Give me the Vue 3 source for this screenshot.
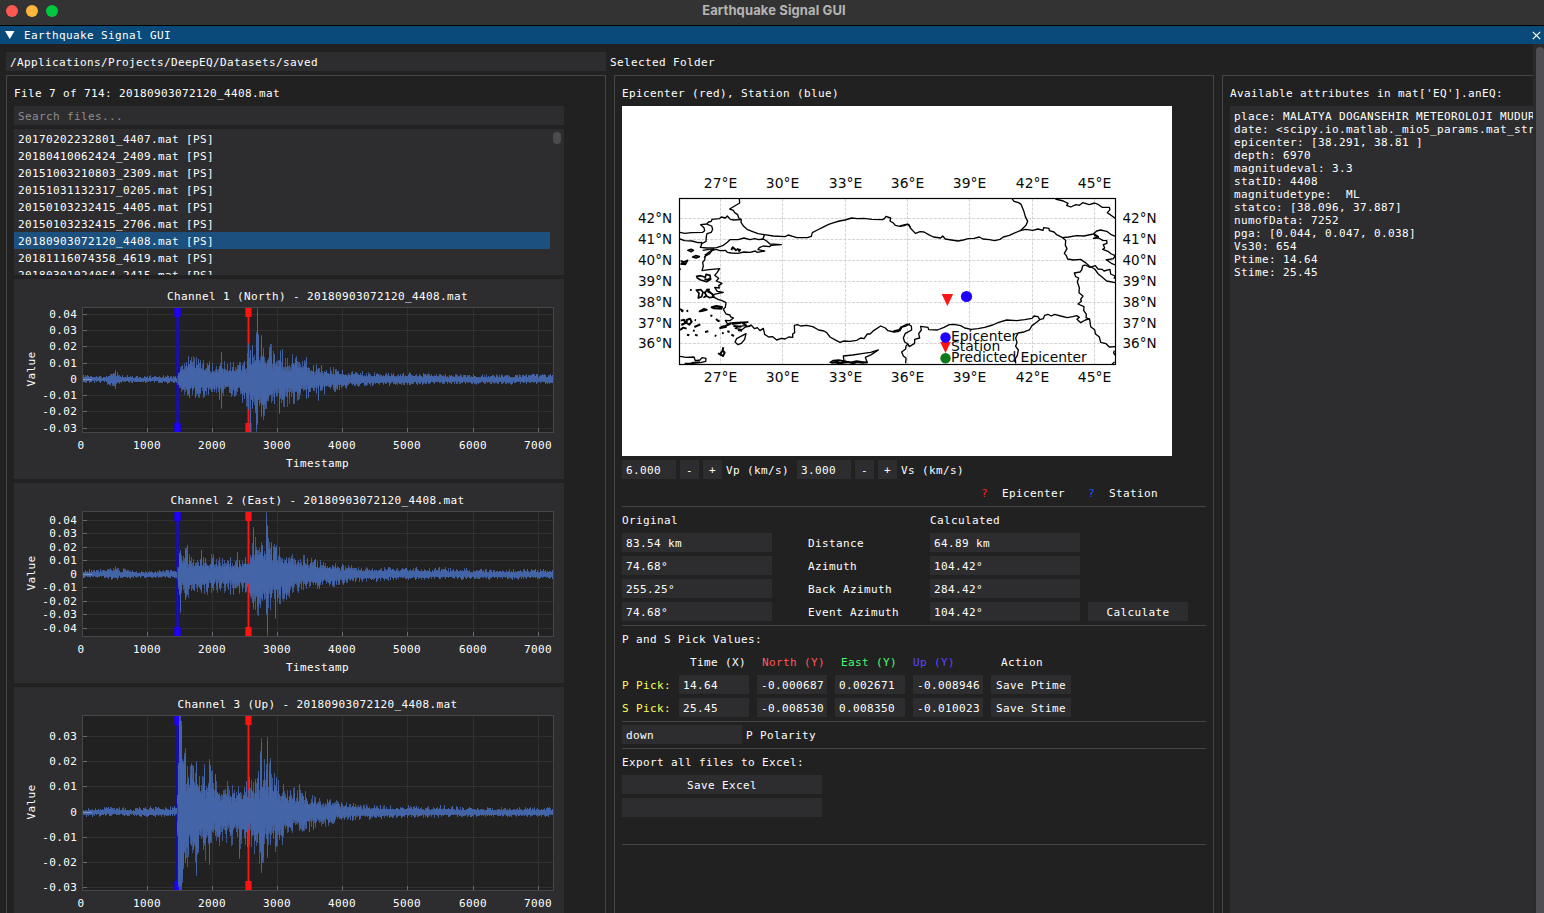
<script setup>
const files = [
  '20170202232801_4407', '20180410062424_2409', '20151003210803_2309', '20151031132317_0205',
  '20150103232415_4405', '20150103232415_2706', '20180903072120_4408', '20181116074358_4619',
  '20180301024054_2415',
]

const attributes = [
  'place: MALATYA DOGANSEHIR METEOROLOJI MUDURLUGU',
  'date: <scipy.io.matlab._mio5_params.mat_struct object>',
  'epicenter: [38.291, 38.81 ]',
  'depth: 6970',
  'magnitudeval: 3.3',
  'statID: 4408',
  'magnitudetype:  ML',
  'statco: [38.096, 37.887]',
  'numofData: 7252',
  'pga: [0.044, 0.047, 0.038]',
  'Vs30: 654',
  'Ptime: 14.64',
  'Stime: 25.45',
]

const xTicks = [
  [67.5, '0'], [133.5, '1000'], [198.5, '2000'], [263.5, '3000'],
  [328.5, '4000'], [393.5, '5000'], [459.5, '6000'], [524.5, '7000'],
]

// Envelope rows: [x, height above zero, height below zero]
const tail = [[330, 11, 10], [342, 9, 8], [360, 8, 7], [385, 7, 6], [430, 7, 5], [480, 5, 5], [540, 6, 5]]
const defs = [
  {
    title: 'Channel 1 (North) - 20180903072120_4408.mat', height: 200, bottom: 154, zero: 100.5, seed: 11,
    ticks: [[35.5, '0.04'], [51.5, '0.03'], [67.5, '0.02'], [84.5, '0.01'], [100.5, '0'], [116.5, '-0.01'], [132.5, '-0.02'], [149.5, '-0.03']],
    env: [[68, 6, 5], [72, 5, 4], [90, 4, 4], [94, 6, 6], [101, 10, 9], [106, 5, 4], [120, 4, 4], [162, 4, 4], [165, 12, 15], [174, 24, 19], [186, 24, 20], [198, 18, 20], [206, 24, 21], [212, 18, 18], [224, 19, 19], [230, 22, 26], [236, 36, 36], [244, 48, 46], [250, 40, 46], [257, 37, 34], [266, 30, 30], [276, 26, 28], [290, 22, 21], [301, 18, 17], [315, 14, 14], ...tail],
    spikes: [[174, 24, 15], [207, 28, 29], [228, 15, 23], [234, 37, 30], [236, 30, 53], [242, 48, 53], [243, 72, 45], [244, 46, 20], [268, 31, 20], [265, 20, 34], [292, 23, 19], [304, 12, 21]],
  },
  {
    title: 'Channel 2 (East) - 20180903072120_4408.mat', height: 200, bottom: 154, zero: 91.5, seed: 37,
    ticks: [[37.5, '0.04'], [50.5, '0.03'], [64.5, '0.02'], [77.5, '0.01'], [91.5, '0'], [104.5, '-0.01'], [118.5, '-0.02'], [131.5, '-0.03'], [145.5, '-0.04']],
    env: [[68, 5, 4], [90, 5, 4], [101, 9, 7], [106, 5, 4], [113, 8, 5], [120, 4, 4], [162, 5, 4], [165, 22, 22], [172, 28, 26], [178, 18, 18], [186, 20, 23], [200, 22, 18], [220, 16, 22], [232, 19, 18], [236, 28, 28], [242, 39, 40], [248, 43, 44], [256, 35, 40], [264, 29, 30], [273, 22, 26], [284, 20, 18], [300, 17, 15], [315, 13, 13], ...tail],
    spikes: [[166, 25, 38], [171, 27, 25], [173, 30, 20], [187, 25, 18], [223, 23, 12], [239, 48, 34], [252, 64, 40], [253, 50, 64], [261, 28, 44]],
  },
  {
    title: 'Channel 3 (Up) - 20180903072120_4408.mat', height: 240, bottom: 204, zero: 125.5, seed: 71,
    ticks: [[49.5, '0.03'], [74.5, '0.02'], [99.5, '0.01'], [125.5, '0'], [150.5, '-0.01'], [175.5, '-0.02'], [200.5, '-0.03']],
    env: [[68, 4, 4], [100, 6, 4], [120, 4, 4], [130, 7, 5], [162, 6, 4], [163, 30, 50], [168, 62, 68], [173, 54, 54], [182, 54, 52], [195, 48, 46], [204, 38, 36], [214, 34, 36], [224, 28, 34], [232, 34, 42], [240, 40, 42], [246, 56, 52], [254, 50, 52], [262, 44, 40], [270, 32, 32], [282, 26, 24], [294, 21, 20], [307, 17, 16], [318, 13, 12], ...tail],
    spikes: [[164, 50, 74], [165, 97, 79], [166, 97, 79], [167, 92, 79], [168, 54, 70], [169, 52, 56], [171, 65, 50], [182, 52, 63], [195, 54, 52], [196, 48, 30], [225, 20, 46], [246, 62, 40], [247, 75, 60], [253, 76, 45], [256, 55, 32], [262, 36, 34], [285, 29, 18], [292, 15, 16]],
  },
]

function buildWave(d) {
  let s = d.seed
  const rnd = () => {
    s = (s * 1103515245 + 12345) % 2147483648
    return s / 2147483648
  }
  const e = [...d.env]
  e.push([541, 5, 4])
  let outer = ''
  let inner = ''
  for (let x = 69; x < 539; x++) {
    let i = 0
    while (i < e.length - 2 && e[i + 1][0] <= x) i++
    const t = (x - e[i][0]) / (e[i + 1][0] - e[i][0])
    const a = e[i][1] + (e[i + 1][1] - e[i][1]) * t
    const b = e[i][2] + (e[i + 1][2] - e[i][2]) * t
    let up = a * (0.42 + 0.6 * rnd() ** 1.5)
    let dn = b * (0.42 + 0.6 * rnd() ** 1.5)
    const spike = d.spikes.find((p) => p[0] === x)
    if (spike) [, up, dn] = spike
    const top = Math.max(29, Math.round(d.zero - up))
    const bot = Math.min(d.bottom - 1, Math.round(d.zero + dn))
    outer += `M${x} ${top}h1V${bot}h-1z`
    const k = spike ? 0.95 : 0.6 + 0.4 * rnd()
    inner += `M${x} ${Math.round(d.zero - (d.zero - top) * k)}h1V${Math.round(d.zero + (bot - d.zero) * k)}h-1z`
  }
  return { outer, inner }
}
const charts = defs.map((d) => ({ ...d, ...buildWave(d) }))

const lon = [[720.5, '27°E'], [782.5, '30°E'], [845.5, '33°E'], [907.5, '36°E'], [969.5, '39°E'], [1032.5, '42°E'], [1094.5, '45°E']]
const lat = [[218.5, '42°N'], [239.5, '41°N'], [260.5, '40°N'], [281.5, '39°N'], [302.5, '38°N'], [323.5, '37°N'], [343.5, '36°N']]

const results = [
  ['83.54 km', 'Distance', '64.89 km'],
  ['74.68°', 'Azimuth', '104.42°'],
  ['255.25°', 'Back Azimuth', '284.42°'],
  ['74.68°', 'Event Azimuth', '104.42°'],
]
const picks = [
  ['P Pick:', '14.64', '-0.000687', '0.002671', '-0.008946', 'Save Ptime'],
  ['S Pick:', '25.45', '-0.008530', '0.008350', '-0.010023', 'Save Stime'],
]
</script>

<template>
  <div class="window">
    <header class="mac-bar">
      <i class="dot red"></i><i class="dot amber"></i><i class="dot green"></i>
      <span class="mac-title">Earthquake Signal GUI</span>
    </header>
    <div class="title-bar">
      <svg class="arrow" width="10" height="9" viewBox="0 0 10 9"><path d="M0 0h9.5L4.75 8z" fill="#fff" /></svg>
      <span>Earthquake Signal GUI</span>
      <svg class="close" width="9" height="9" viewBox="0 0 9 9"><path d="M.8.8l7.4 7.4M8.2.8L.8 8.2" stroke="#fff" stroke-width="1.2" /></svg>
    </div>

    <div class="body">
      <main class="content">
        <div class="row folder">
          <div class="field path">/Applications/Projects/DeepEQ/Datasets/saved</div>
          <span>Selected Folder</span>
        </div>

        <div class="panels">
          <section class="panel">
            <div class="row">File 7 of 714: 20180903072120_4408.mat</div>
            <div class="field search">Search files...</div>
            <div class="list">
              <div v-for="(f, i) in files" :key="f" class="item" :class="{ active: i === 6 }">{{ f }}.mat [PS]</div>
              <i class="list-thumb"></i>
            </div>
            <svg v-for="c in charts" :key="c.title" class="plot" width="550" :height="c.height" :viewBox="`0 0 550 ${c.height}`">
              <rect x="68" y="28" width="472" :height="c.bottom - 28" fill="#212121" />
              <g stroke="#303031" stroke-width="1">
                <path v-for="t in xTicks.slice(1)" :key="t[1]" :d="`M${t[0]} 29V${c.bottom}`" />
                <path v-for="t in c.ticks" :key="t[1]" :d="`M69 ${t[0]}H539`" />
              </g>
              <g stroke="#6a6a6c" stroke-width="1">
                <path v-for="t in xTicks.slice(1)" :key="t[1]" :d="`M${t[0]} ${c.bottom - 5}v4`" />
                <path v-for="t in c.ticks" :key="t[1]" :d="`M69 ${t[0]}h4`" />
              </g>
              <g shape-rendering="crispEdges">
                <rect x="162" y="29" width="3" :height="c.bottom - 30" fill="#170d9e" />
                <rect x="163" y="29" width="1" :height="c.bottom - 30" fill="#2000ff" />
                <rect x="233" y="29" width="3" :height="c.bottom - 30" fill="#8d191b" />
                <rect x="234" y="29" width="1" :height="c.bottom - 30" fill="#ff1414" />
                <template v-for="y in [29, c.bottom - 10]" :key="y">
                  <rect x="160" :y="y" width="7" height="9" fill="#190ab0" />
                  <rect x="161" :y="y" width="5" height="9" fill="#2000ff" />
                  <rect x="231" :y="y" width="7" height="9" fill="#a81719" />
                  <rect x="232" :y="y" width="5" height="9" fill="#ff1212" />
                </template>
                <path :d="c.outer" fill="#4565aa" fill-opacity=".75" />
                <path :d="c.inner" fill="#4565aa" fill-opacity=".95" />
                <rect x="163" :y="c.zero - 9" width="1" height="18" fill="#2000ff" fill-opacity=".5" />
              </g>
              <path :d="`M69 ${c.zero}h9`" stroke="#7c90bd" />
              <rect x="68.5" y="28.5" width="471" :height="c.bottom - 29" fill="none" stroke="#464648" />
              <g class="plot-text">
                <text x="303.5" y="21" text-anchor="middle">{{ c.title }}</text>
                <text v-for="t in xTicks" :key="t[1]" :x="t[0] - 0.4" :y="c.bottom + 16" text-anchor="middle">{{ t[1] }}</text>
                <text v-for="t in c.ticks" :key="t[1]" x="63.2" :y="t[0] + 3.5" text-anchor="end">{{ t[1] }}</text>
                <text x="303.5" :y="c.bottom + 34" text-anchor="middle">Timestamp</text>
                <text :transform="`translate(21 ${(28 + c.bottom) / 2 - 1}) rotate(-90)`" text-anchor="middle">Value</text>
              </g>
            </svg>
          </section>

          <section class="panel">
            <div class="row">Epicenter (red), Station (blue)</div>
            <svg class="map" width="550" height="350" viewBox="622 106 550 350">
              <rect x="622" y="106" width="550" height="350" fill="#fff" />
              <g stroke="#d4d4d4" stroke-width="1" stroke-dasharray="3 1.3">
                <path v-for="l in lon" :key="l[1]" :d="`M${l[0]} 199V364`" />
                <path v-for="l in lat" :key="l[1]" :d="`M680 ${l[0]}H1115`" />
              </g>
              <g class="coast" transform="translate(670 170) scale(.33333)">
                <path d="M208 86L209 99L194 108L179 117L190 121L194 128L203 134L206 143L214 149L213 157L221 169L233 179L246 184L264 191L283 194L310 198L345 200L355 195L368 199L380 203L412 203L424 199L427 188L442 180L458 172L476 163L492 158L508 153L525 150L545 144L562 146L582 145L606 148L638 149L644 145L648 139L662 144L660 153L670 159L676 166L690 169L703 167L713 162L722 172" />
                <path d="M30 187L44 190L64 188L98 187L104 182L102 173L92 164L110 162L116 156L124 154L126 148L148 146L154 141L166 144L172 138L181 148L192 150L213 149M112 163L125 168L128 178L124 187L111 191L109 200L108 214L94 222" />
                <path d="M30 207L44 212L66 213L84 218L95 217L94 226L91 232L110 234L140 233L160 226L172 217L180 209L204 209L222 204L240 209L254 206L266 209L280 207L290 213L300 222L334 224L304 226L298 230L280 228L268 233L264 239L284 243L262 247L256 243L240 247L222 246L204 250L184 249L172 247L166 241L150 242L138 238L126 242L118 252L106 258L104 270L98 277L100 288L96 302L118 299L149 296L141 308L134 316L146 325L139 333L156 340L146 347L148 354L134 352L142 364L160 367L132 373L128 380L144 388L156 392L168 398L166 412L160 418L168 432L180 435L182 441L190 444L180 452L166 451L172 461L190 458L234 456L218 461L230 466L204 470L196 475L216 479L226 471L241 468" />
                <path d="M283 195L279 207M98 241L132 236L104 256M102 263L118 246" />
                <path d="M236 470L243 465L254 476L262 473L270 482L280 475L284 493L296 501L308 500L320 510L334 505L345 507L356 501L368 502L368 492L374 488L373 466L382 464L392 468L410 466L428 470L446 480L462 483L470 488L480 501L494 509L510 517L522 513L540 514L560 511L572 504L582 506L592 492L600 492L612 481L632 468L646 474L654 482L672 486L690 482L696 471L708 468L720 461" />
                <path d="M672 484L688 480L694 472L684 484z" stroke-width="6" />
                <path d="M480 577L490 571L506 570L522 573L520 558L548 555L580 550L602 547L625 540L604 554L586 562L592 578L560 573L540 577L524 573L506 580z" />
                <path d="M484 578L500 575L514 579L534 576L550 580L560 576L578 578L592 577" stroke-width="6" />
                <path d="M30 559L48 562L72 561L76 572L90 570L96 563L108 565L107 574L92 578L68 580L44 580M64 578L90 576" />
                <path d="M228 491L224 508L214 520L204 524L195 516L200 506L211 500z" />
                <path d="M54 241l9-3 7 3-6 4zM68 261l9-4 11 3-10 4zM32 272l10 4 11-5-7 12-15-1M34 278l14 3M80 319l12-2 14 5 2-9 12 3 2 12-12 7-18-5-10-6zM103 327l10 2 8-5M79 360l14-1 6 8-4 13-10 4 2-14zM104 370l8-12 12 12 8 11-14 2-8-5-8 4 7-6-5-9zM118 356l-4 9 12 6 6 7" stroke-width="5" />
                <path d="M60 359l5 2M29 297l3 2M30 417l8 5-3 4M50 421l4 4M89 424l12-7 9 2-15 4zM125 412l14-4 17 3-2 5-22-1zM121 436l6 2M138 447l7 6 4-1M152 471l14-3 18-8M32 452l10-3 4 10-12 6M50 450l10-4 5 9-7 9-8-5zM74 450l4 1M73 471l18-8M30 480l10-7 10 3M69 481l5 2M105 486l10-2M51 494l7 2M75 494l8 3M134 496l5 2M156 490l5-1M172 484l7 2M184 494l8 4M148 475l22-5M186 462l28-4M190 468l24 2M204 480l12 2M184 240l4-8 12 10M200 237l10 3-5 5M160 532l-2 9 6 7-5 10-9-5 7-10M154 554l-10-4" stroke-width="6" />
              </g>
              <g class="coast" transform="translate(900 170) scale(.33333)">
                <path d="M0 168L18 163L27 164L31 174L46 190L60 185L72 186L86 194L100 201L122 204L128 198L136 207L154 210L174 213L190 210L205 206L222 205L238 201L249 207L268 209L284 212L300 208L310 201L328 196L346 188L361 182L378 166L383 154L376 140L371 122L363 103L356 98L342 94L336 86" />
                <path d="M361 182L376 178L398 181L414 177L429 181L431 173L447 175L448 182L462 186L470 194L486 202L497 211L496 226L501 236L493 250L499 257L503 267L520 270L542 268L555 277L568 288L584 297L594 311L606 321L620 333L645 338" />
                <path d="M487 203L506 201L530 197L552 198L580 192L590 183L602 180L620 184L632 193L646 199M466 87L490 93L504 100L500 106L512 111L528 104L538 106L548 98L568 104L584 99L596 104L606 112L628 112L630 119L622 128L636 138L646 145" />
                <path d="M580 190L595 200L580 205L596 204L608 211L620 212L621 220L610 224L614 234L608 238L624 244L634 252L646 257L640 266L620 270L634 280L646 285M582 197L596 200M617 270L640 266" />
                <path d="M556 285L548 288L545 300L540 306L523 309L527 320L536 324L532 336L538 353L537 368L549 378L542 388L544 394L534 402L552 410L551 421L559 433L558 443L569 448L572 470L584 479L586 491L598 501L602 517L618 521L628 531L646 530M556 285L570 292L586 287L594 297L606 298L612 303L630 298L632 312L645 318L642 326" />
                <path d="M0 473L22 462L34 468L35 480L16 490L10 504L14 516L24 522L28 530L44 520L44 508L59 504L56 491L64 480L62 469L84 472L86 479L112 480L132 472L148 464L162 463L182 467L194 474L214 478L234 476L254 472L278 465L296 457L320 450L350 452L374 449L396 445L402 438L414 440L419 449L410 457L396 467L388 480L372 486L354 489L347 504L351 517L347 529L355 540L352 556L346 566L347 580M419 449L430 446L434 436L444 433L454 438L464 433L482 438L502 443L518 440L530 437L538 442L531 448L542 458L556 450L570 446" />
                <path d="M24 522L18 528L17 537L5 546L10 558L18 564L17 580M643 542L641 549L646 556M636 582L644 576" />
              </g>
              <rect x="679.5" y="198.5" width="436" height="166" fill="none" stroke="#000" stroke-width="1.2" />
              <g class="map-text">
                <template v-for="l in lon" :key="l[1]">
                  <text :x="l[0]" y="188.3" text-anchor="middle">{{ l[1] }}</text>
                  <text :x="l[0]" y="382.3" text-anchor="middle">{{ l[1] }}</text>
                </template>
                <g class="lat-text">
                  <template v-for="l in lat" :key="l[1]">
                    <text x="672" :y="l[0] + 4.5" text-anchor="end">{{ l[1] }}</text>
                    <text x="1122.5" :y="l[0] + 4.5">{{ l[1] }}</text>
                  </template>
                </g>
                <text x="951" y="341.3">Epicenter</text>
                <text x="951" y="351.3">Station</text>
                <text x="951" y="362.3">Predicted Epicenter</text>
              </g>
              <path d="M941.7 294h11.4l-5.7 12z" fill="#ff1414" />
              <circle cx="966.5" cy="296.5" r="5.6" fill="#1f00ff" />
              <path d="M940.2 342h10.6l-5.3 11z" fill="#ff1414" />
              <circle cx="945.5" cy="337.5" r="5.2" fill="#1f00ff" />
              <circle cx="945.5" cy="358.3" r="5.2" fill="#0b7a18" />
            </svg>
            <div class="row velocity">
              <div class="field num">6.000</div><div class="btn sq">-</div><div class="btn sq">+</div><span class="vp">Vp (km/s)</span>
              <div class="field num">3.000</div><div class="btn sq">-</div><div class="btn sq">+</div><span>Vs (km/s)</span>
            </div>
            <div class="row legend">
              <span class="q-red">?</span><span>Epicenter</span><span class="q-blue">?</span><span>Station</span>
            </div>
            <hr class="sep" />
            <div class="row result"><span>Original</span><span></span><span>Calculated</span></div>
            <div v-for="r in results" :key="r[1]" class="row result">
              <div class="field">{{ r[0] }}</div>
              <span class="name">{{ r[1] }}</span>
              <div class="field">{{ r[2] }}</div>
              <div v-if="r[1] === 'Event Azimuth'" class="btn">Calculate</div>
            </div>
            <hr class="sep" />
            <div class="row">P and S Pick Values:</div>
            <div class="row pick head">
              <span></span><span class="h-time">Time (X)</span><span class="h-north">North (Y)</span>
              <span class="h-east">East (Y)</span><span class="h-up">Up (Y)</span><span class="h-action">Action</span>
            </div>
            <div v-for="p in picks" :key="p[0]" class="row pick">
              <span class="yellow">{{ p[0] }}</span>
              <div v-for="v in p.slice(1, 5)" :key="v" class="field">{{ v }}</div>
              <div class="btn">{{ p[5] }}</div>
            </div>
            <hr class="sep" />
            <div class="row polarity"><div class="field">down</div><span>P Polarity</span></div>
            <hr class="sep" />
            <div class="row">Export all files to Excel:</div>
            <div class="btn wide">Save Excel</div>
            <div class="btn wide"></div>
            <div class="row"></div>
            <hr class="sep" />
          </section>

          <section class="panel">
            <div class="row">Available attributes in mat['EQ'].anEQ:</div>
            <div class="attrs">
              <div v-for="a in attributes" :key="a">{{ a }}</div>
            </div>
          </section>
        </div>
      </main>
      <div class="scroll"><i class="scroll-thumb"></i></div>
    </div>
  </div>
</template>

<style>
body { background: #212121; overflow: hidden; }
</style>

<style scoped>
.window {
  width: 1544px;
  height: 913px;
  overflow: hidden;
  display: flex;
  flex-direction: column;
  background: #212121;
  color: #fff;
  font: 11px/21px "DejaVu Sans Mono", monospace;
  letter-spacing: 0.378px;
  white-space: pre;
}
.window *, .window { box-sizing: border-box; }
.mac-bar {
  flex: none;
  height: 26px;
  display: flex;
  gap: 8px;
  padding: 5px 0 0 6px;
  background: #333;
  border-bottom: 1px solid #000;
  position: relative;
}
.dot { width: 12px; height: 12px; border-radius: 50%; }
.red { background: #ff5850; }
.amber { background: #ffb63a; }
.green { background: #00c940; }
.mac-title {
  position: absolute;
  left: 0;
  right: 0;
  top: 0;
  text-align: center;
  color: #b5b5b5;
  font: 700 13px/20px Inter, sans-serif;
  letter-spacing: 0.12px;
  padding-left: 4px;
}
.title-bar {
  flex: none;
  height: 18px;
  line-height: 18px;
  display: flex;
  align-items: center;
  padding: 0 3px 0 5px;
  background: #0a4a7a;
}
.title-bar span { padding-top: 1px; }
.arrow { margin-right: 9px; }
.close { margin-left: auto; }
.body { flex: 1; min-height: 0; display: flex; }
.content {
  flex: 1;
  min-width: 0;
  overflow: hidden;
  display: flex;
  flex-direction: column;
  gap: 4px;
  padding: 8px 0 0 6px;
}
.scroll { flex: none; width: 11px; background: #2a2a2b; padding: 3px 0 0 3px; }
.scroll-thumb { display: block; width: 8px; height: 900px; border-radius: 4px; background: #4f4f53; }
.row { flex: none; height: 19px; display: flex; }
.field, .btn { flex: none; height: 19px; background: #2d2d2f; }
.field { padding-left: 4px; }
.btn { text-align: center; }
.folder { gap: 4px; }
.path { width: 600px; }
.panels { flex: none; display: flex; gap: 8px; }
.panel {
  flex: none;
  width: 600px;
  height: 850px;
  overflow: hidden;
  border: 1px solid #464648;
  padding: 7px;
  display: flex;
  flex-direction: column;
  gap: 4px;
}
.search { width: 550px; color: #8d8d8d; }
.list {
  flex: none;
  width: 550px;
  height: 146px;
  padding-top: 1px;
  overflow: hidden;
  position: relative;
  background: #2d2d2f;
}
.item { width: 536px; height: 17px; line-height: 20px; padding-left: 4px; }
.active { background: #1c507e; }
.list-thumb { position: absolute; left: 539px; top: 3px; width: 8px; height: 12px; border-radius: 4px; background: #4b4b4e; }
.plot { flex: none; display: block; background: #2d2d2f; }
.plot-text { fill: #fff; }
.map { flex: none; display: block; }
.map-text { font: 13.9px "DejaVu Sans", sans-serif; letter-spacing: 0; fill: #0a0a0a; }
.lat-text { font-size: 13.5px; }
.coast { fill: none; stroke: #000; stroke-width: 4; stroke-linejoin: round; }
.velocity { gap: 4px; }
.num { width: 54px; }
.sq { width: 19px; }
.vp { width: 67px; }
.legend { padding-left: 359px; }
.legend span { width: 86px; }
.legend .q-red, .legend .q-blue { width: 21px; }
.q-red { color: #ff1e1e; }
.q-blue { color: #1458ff; }
.sep { flex: none; width: 584px; height: 1px; margin: 0 0 -1px; border: 0; background: #464648; }
.result { display: grid; grid-template-columns: 150px 158px 150px 100px; }
.result > :nth-child(2) { padding-left: 36px; }
.result > :nth-child(4) { margin-left: 8px; width: 100px; }
.pick { display: grid; grid-template-columns: 49px repeat(4, 70px) 80px; column-gap: 8px; }
.h-time { padding-left: 11px; }
.h-north { padding-left: 5px; color: #ff5a5a; }
.h-east { padding-left: 6px; color: #46ff6e; }
.h-up { color: #5a46ff; }
.h-action { padding-left: 10px; }
.yellow { color: #ffff5a; }
.polarity { gap: 4px; }
.polarity .field { width: 120px; }
.wide { width: 200px; }
.attrs { flex: 1; width: 584px; background: #2d2d2f; padding: 4px; line-height: 13px; }
</style>
